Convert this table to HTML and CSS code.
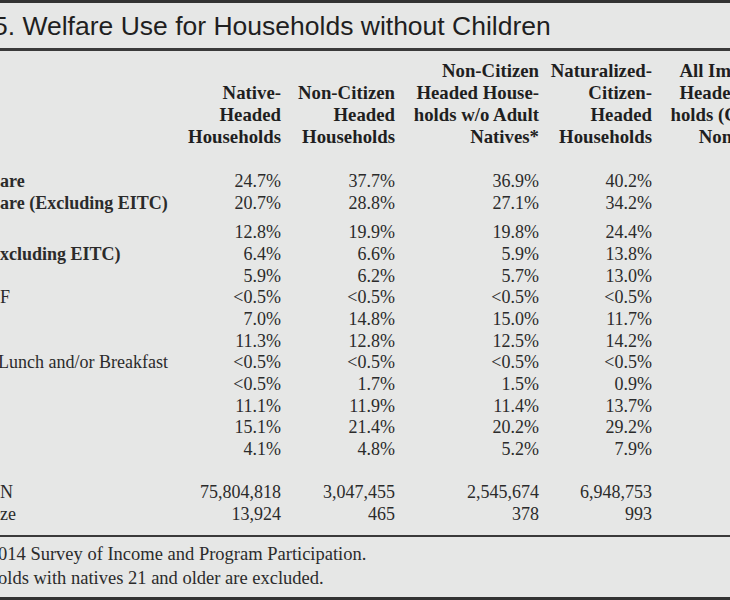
FILE: index.html
```html
<!DOCTYPE html>
<html lang="en">
<head>
<meta charset="utf-8">
<title>Welfare Use for Households without Children</title>
<link rel="stylesheet" href="styles.css">
</head>
<body>
<div class="sheet">
  <div class="title">
    <h1>5. Welfare Use for Households without Children</h1>
  </div>
  <div class="data">
    <table>
      <colgroup>
        <col class="c-label">
        <col class="c1">
        <col class="c2">
        <col class="c3">
        <col class="c4">
        <col class="c5">
      </colgroup>
      <thead>
        <tr>
          <th class="label"></th>
          <th>Native-<br>Headed<br>Households</th>
          <th>Non-Citizen<br>Headed<br>Households</th>
          <th>Non-Citizen<br>Headed House-<br>holds w/o Adult<br>Natives*</th>
          <th>Naturalized-<br>Citizen-<br>Headed<br>Households</th>
          <th>All Immigrant-<br>Headed House-<br>holds (Citizen &amp;<br>Non-Citizen)</th>
        </tr>
      </thead>
      <tbody>
        <tr><td class="label strong">are</td><td>24.7%</td><td>37.7%</td><td>36.9%</td><td>40.2%</td><td></td></tr>
        <tr><td class="label strong">are (Excluding EITC)</td><td>20.7%</td><td>28.8%</td><td>27.1%</td><td>34.2%</td><td></td></tr>
        <tr class="sep"><td class="label"></td><td>12.8%</td><td>19.9%</td><td>19.8%</td><td>24.4%</td><td></td></tr>
        <tr><td class="label strong">xcluding EITC)</td><td>6.4%</td><td>6.6%</td><td>5.9%</td><td>13.8%</td><td></td></tr>
        <tr><td class="label"></td><td>5.9%</td><td>6.2%</td><td>5.7%</td><td>13.0%</td><td></td></tr>
        <tr><td class="label">F</td><td>&lt;0.5%</td><td>&lt;0.5%</td><td>&lt;0.5%</td><td>&lt;0.5%</td><td></td></tr>
        <tr><td class="label"></td><td>7.0%</td><td>14.8%</td><td>15.0%</td><td>11.7%</td><td></td></tr>
        <tr><td class="label"></td><td>11.3%</td><td>12.8%</td><td>12.5%</td><td>14.2%</td><td></td></tr>
        <tr><td class="label cut">Lunch and/or Breakfast</td><td>&lt;0.5%</td><td>&lt;0.5%</td><td>&lt;0.5%</td><td>&lt;0.5%</td><td></td></tr>
        <tr><td class="label"></td><td>&lt;0.5%</td><td>1.7%</td><td>1.5%</td><td>0.9%</td><td></td></tr>
        <tr><td class="label"></td><td>11.1%</td><td>11.9%</td><td>11.4%</td><td>13.7%</td><td></td></tr>
        <tr><td class="label"></td><td>15.1%</td><td>21.4%</td><td>20.2%</td><td>29.2%</td><td></td></tr>
        <tr><td class="label"></td><td>4.1%</td><td>4.8%</td><td>5.2%</td><td>7.9%</td><td></td></tr>
        <tr class="spacer"><td colspan="6"></td></tr>
        <tr><td class="label">N</td><td>75,804,818</td><td>3,047,455</td><td>2,545,674</td><td>6,948,753</td><td></td></tr>
        <tr><td class="label">ze</td><td>13,924</td><td>465</td><td>378</td><td>993</td><td></td></tr>
      </tbody>
    </table>
  </div>
  <div class="notes">
    <p class="cut">014 Survey of Income and Program Participation.</p>
    <p class="cut">olds with natives 21 and older are excluded.</p>
  </div>
</div>
</body>
</html>
```

FILE: styles.css
```css
html, body {
  margin: 0;
  padding: 0;
  overflow: hidden;
  background: #e6e7e6;
}

body {
  width: 730px;
  height: 600px;
}

.sheet {
  width: 830px;
  color: #2b2b2b;
  font-family: "Liberation Serif", "Times New Roman", serif;
  font-size: 18px;
}

.title {
  height: 45px;
  border-top: 3px solid #333;
  border-bottom: 3px solid #3a3a3a;
  display: flex;
  align-items: center;
}

.title h1 {
  margin: 2px 0 0 -7px;
  font-family: "Liberation Sans", Arial, sans-serif;
  font-size: 26.5px;
  font-weight: normal;
  color: #1f1f1f;
  white-space: nowrap;
}

.data {
  padding-top: 9px;
}

table {
  border-collapse: collapse;
  table-layout: fixed;
  width: 802px;
}

.c-label { width: 181px; }
.c1 { width: 100px; }
.c2 { width: 114px; }
.c3 { width: 144px; }
.c4 { width: 113px; }
.c5 { width: 150px; }

th {
  padding: 0 0 23px 0;
  font-size: 18.8px;
  font-weight: bold;
  color: #1f1f1f;
  text-align: right;
  vertical-align: bottom;
  line-height: 22px;
  white-space: nowrap;
}

td {
  padding: 0;
  height: 21.67px;
  line-height: 21.67px;
  text-align: right;
  white-space: nowrap;
}

td.label {
  text-align: left;
}

td.strong {
  font-weight: bold;
}

.cut {
  text-indent: -2px;
}

tr.sep td {
  padding-top: 8px;
}

tr.spacer td {
  height: 21.3px;
}

.notes {
  margin-top: 10px;
  border-top: 2px solid #3a3a3a;
  border-bottom: 3px solid #333;
  padding: 6px 0 7px;
}

.notes p {
  margin: 0;
  font-size: 18.5px;
  line-height: 23.5px;
  white-space: nowrap;
}
```
